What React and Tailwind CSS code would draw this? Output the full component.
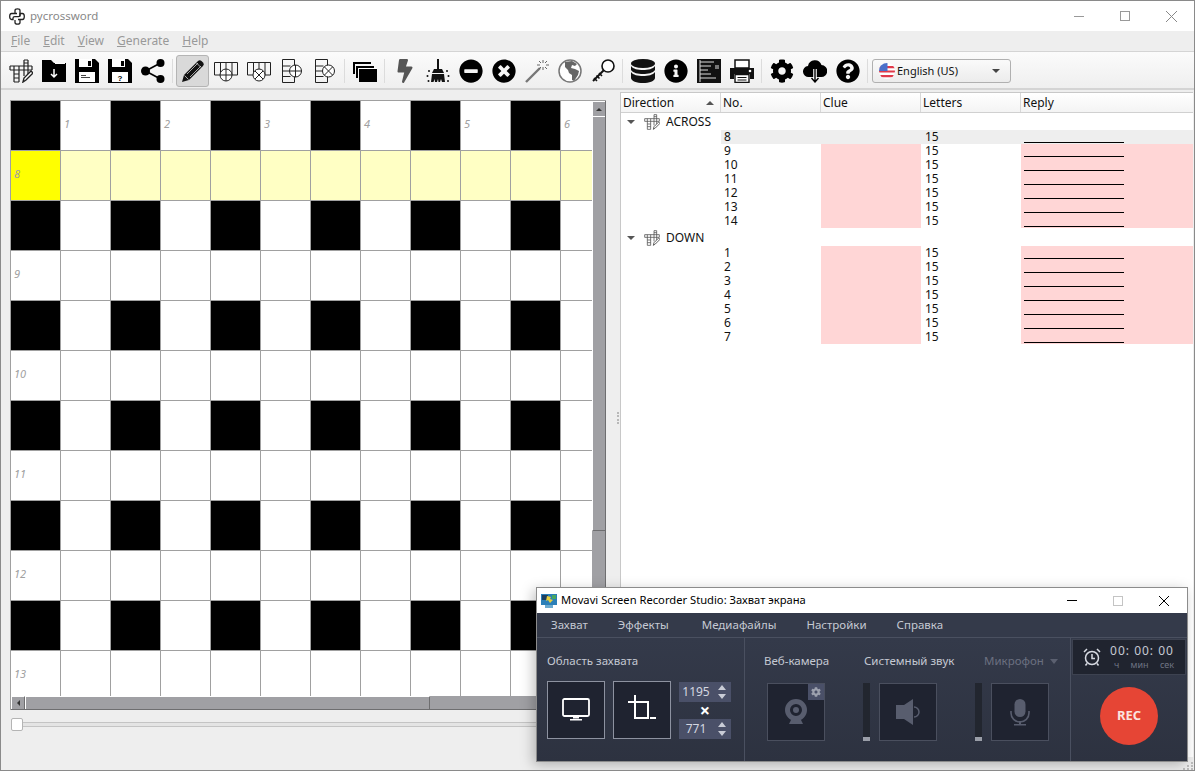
import { FaBolt, FaMinusCircle, FaTimesCircle, FaInfoCircle, FaCog, FaQuestionCircle } from "react-icons/fa";

const SANS = "font-['Noto_Sans','Open_Sans',sans-serif]";

// ── drawn icons ──────────────────────────────
function CrossIcon({ size = 24, color = "#222" }) {
  return (
    <svg width={size} height={size} viewBox="0 0 24 24" fill="none" stroke={color} strokeWidth="1.2">
      <path d="M1 7h22M1 11h22M1 7v4M5 7v16M10 7v16M5 15h5M5 19h5M5 23h5M15 1v16M19 1v14M15 1h4M15 4h4M23 7v4" />
      <path d="M14 23l1-4 7-7 2 2-7 7z" fill="#fff" strokeWidth="1.4" />
    </svg>
  );
}

function PythonIcon() {
  return (
    <svg width="17" height="17" viewBox="0 0 17 17" fill="none" stroke="#222" strokeWidth="1.3">
      <path d="M6 5.500V2.500C6 1.300 7 .8 8.500.8S11 1.300 11 2.500V7c0 1-.7 1.600-1.600 1.600H5.800C4.800 8.600 4 9.300 4 10.300v1.200H2.600C1.400 11.500.7 10.300.7 8.500S1.400 5.500 2.600 5.500H8" />
      <path d="M11 8.500V5.500h2.400c1.200 0 1.900 1.200 1.900 3s-.7 3-1.900 3H9M11 11.500v3c0 1.200-1 1.700-2.500 1.700S6 15.700 6 14.500V12" />
    </svg>
  );
}

function FolderIcon() {
  return (
    <svg width="24" height="24" viewBox="0 0 24 24">
      <path d="M0 1h9l3 3h12v19H0z" fill="#000" />
      <path d="M13 4h10v1H13z" fill="#fff" />
      <path d="M12 10v8M9 15l3 3 3-3" stroke="#fff" strokeWidth="1.500" fill="none" />
    </svg>
  );
}

function FloppyIcon({ question }) {
  return (
    <svg width="24" height="24" viewBox="0 0 24 24">
      <path d="M0 0h20l4 4v20H0z" fill="#000" />
      <path d="M4 0h13v8H4z" fill="#fff" />
      <path d="M13 2h3v5h-3z" fill="#000" />
      <path d="M4 13h16v10H4z" fill="#fff" />
      {question ? (
        <text x="12" y="22" fontSize="8" fontWeight="700" textAnchor="middle" fontFamily="Liberation Sans, sans-serif">?</text>
      ) : (
        <path d="M6 16h5v1H6zM6 18h9v1H6z" fill="#444" />
      )}
    </svg>
  );
}

function ShareIcon() {
  return (
    <svg width="24" height="24" viewBox="0 0 24 24" fill="#000">
      <circle cx="4.500" cy="12" r="4.500" />
      <circle cx="19.500" cy="4" r="4" />
      <circle cx="19.500" cy="20" r="4" />
      <path d="M4.500 12L19.500 4M4.500 12l15 8" stroke="#000" strokeWidth="1.600" />
    </svg>
  );
}

function PencilIcon() {
  return (
    <svg width="24" height="24" viewBox="0 0 24 24" fill="none">
      <path d="M1 23l2-7L17 2a2.500 2.500 0 0 1 3.500 0l1.500 1.500a2.500 2.500 0 0 1 0 3.500L8 21z" fill="#111" />
      <path d="M6 15L17 4M9 18L20 7M15.500 4l4.500 4.500" stroke="#d0d0d0" strokeWidth=".8" />
      <path d="M3.500 16.500l4 4" stroke="#d0d0d0" strokeWidth=".8" />
    </svg>
  );
}

function RowIcon({ kind }) {
  return (
    <svg width="24" height="24" viewBox="0 0 24 24" fill="none" stroke="#222" strokeWidth="1">
      <path d="M.5 3.500h23v12.500H.5zM6.500 3.500v12.500M18 3.500v12.500M12 3.500v9" />
      <circle cx="12" cy="16" r="6" fill="#fff" />
      {kind === "plus" ? <path d="M6 16h12M12 10v12" /> : <path d="M8 12l8 8M16 12l-8 8" />}
    </svg>
  );
}

function ColIcon({ kind }) {
  return (
    <svg width="24" height="24" viewBox="0 0 24 24" fill="none" stroke="#222" strokeWidth="1">
      <path d="M2.500.5h12v23h-12zM2.500 7h8M2.500 17.500h8M2.500 12h8" />
      <circle cx="15.500" cy="12" r="6" fill="#fff" />
      {kind === "plus" ? <path d="M9.500 12h12M15.500 6v12" /> : <path d="M11.500 8l8 8M19.500 8l-8 8" />}
    </svg>
  );
}

function WindowsIcon() {
  return (
    <svg width="24" height="24" viewBox="0 0 24 24">
      <path d="M0 3h18v2H0zM0 5h2v10H0z" fill="#000" />
      <path d="M3 7h18v2H3zM3 9h2v10H3z" fill="#000" />
      <path d="M6 10h18v13H6z" fill="#000" />
      <path d="M6 9h18v1H6z" fill="#fff" />
    </svg>
  );
}

function BroomIcon() {
  return (
    <svg width="24" height="24" viewBox="0 0 24 24" fill="#111">
      <path d="M11 0h2v10h-2z" />
      <path d="M8 10h8l2 4H6z" />
      <path d="M6 15h12l1 8h-3l-1-3-1 3h-1.500l-.5-3-1 3h-2l-.5-3-1 3H5z" />
      <circle cx="3" cy="12" r="1" />
      <circle cx="21" cy="12" r="1" />
      <circle cx="1.500" cy="17" r="1" />
      <circle cx="22.500" cy="17" r="1" />
      <circle cx="2.500" cy="22" r="1" />
      <circle cx="22" cy="22" r="1" />
    </svg>
  );
}

function WandIcon() {
  return (
    <svg width="24" height="24" viewBox="0 0 24 24" fill="none">
      <path d="M1 23L15 9" stroke="#777" strokeWidth="2.400" />
      <path d="M18 1v3M18 8v3M12 6h3M21 6h3M14 2l2 2M22 2l-2 2M14 10l2-2M22 10l-2-2" stroke="#666" strokeWidth="1" />
    </svg>
  );
}

function GlobeIcon() {
  return (
    <svg width="24" height="24" viewBox="0 0 24 24">
      <circle cx="12" cy="12" r="11" fill="#fff" stroke="#777" strokeWidth="1.500" />
      <path d="M7 3l7-1 5 3-2 2-3-1-1 3 4 1 4 2-1 4-4 6-2-1 0-5-3-2-1-3-3-3z" fill="#666" />
    </svg>
  );
}

function KeyIcon() {
  return (
    <svg width="24" height="24" viewBox="0 0 24 24" fill="none" stroke="#111">
      <path d="M13 11L2 22" strokeWidth="2" />
      <circle cx="17" cy="7" r="6" strokeWidth="1.600" fill="#fff" />
      <path d="M3 19l3 3M5.500 16.500l3 3M8 14l3 3" strokeWidth="1.600" />
    </svg>
  );
}

function DatabaseIcon() {
  return (
    <svg width="24" height="24" viewBox="0 0 24 24" fill="#111">
      <ellipse cx="12" cy="4.500" rx="12" ry="4.500" />
      <path d="M0 7c2 3 7 4 12 4s10-1 12-4v4c-2 3-7 4-12 4S2 14 0 11z" />
      <path d="M0 13c2 3 7 4 12 4s10-1 12-4v6c0 3-6 5-12 5S0 22 0 19z" />
    </svg>
  );
}

function ListIcon() {
  return (
    <svg width="24" height="24" viewBox="0 0 24 24">
      <path d="M0 0h24v24H0z" fill="#111" />
      <path d="M3 1v22M3 3h14M3 7h11M3 11h8M3 15h11M3 19h16M18 7h4M18 9h4" stroke="#ddd" strokeWidth="1" fill="none" />
    </svg>
  );
}

function PrinterIcon() {
  return (
    <svg width="24" height="24" viewBox="0 0 24 24">
      <path d="M5 1h14v8H5z" fill="#fff" stroke="#111" strokeWidth="1.500" />
      <path d="M0 9h24v11h-4v-5H4v5H0z" fill="#111" />
      <path d="M5 15.500h14v8H5z" fill="#fff" stroke="#111" strokeWidth="1.400" />
      <path d="M7.500 18.500h9M7.500 21h9" stroke="#111" strokeWidth="1" />
      <circle cx="20" cy="12" r="1.300" fill="#fff" />
    </svg>
  );
}

function CloudIcon() {
  return (
    <svg width="24" height="24" viewBox="0 0 24 24">
      <path d="M6 18a5.500 5.500 0 0 1-1-11 7 7 0 0 1 13.500-1A6 6 0 0 1 18 18z" fill="#000" />
      <path d="M12 10v12" stroke="#fff" strokeWidth="3.600" />
      <path d="M12 10v12M8.500 19l3.500 4 3.500-4" stroke="#000" strokeWidth="1.400" fill="none" />
    </svg>
  );
}

function FlagIcon() {
  return (
    <svg width="16" height="16" viewBox="0 0 16 16">
      <defs>
        <clipPath id="flagClip"><circle cx="8" cy="8" r="8" /></clipPath>
      </defs>
      <g clipPath="url(#flagClip)">
        <path d="M0 0h16v16H0z" fill="#fff" />
        <path d="M0 3h16v2.200H0zM0 7.400h16v2.200H0zM0 12h16v2.200H0z" fill="#e0394a" />
        <path d="M0 0h8.500v8H0z" fill="#4a6fc9" />
      </g>
    </svg>
  );
}

function MovaviLogo() {
  return (
    <svg width="16" height="14" viewBox="0 0 16 14">
      <path d="M0 0h16v11H0z" fill="#2b7fb8" />
      <path d="M1 1h6v5H1z" fill="#1d3f5f" />
      <path d="M6 2l4 1-1 2 3 1-3 3-2-3-2 1z" fill="#e8cf3a" />
      <path d="M11 1h4v4h-4z" fill="#48a860" />
      <path d="M4 11h8v3H4z" fill="#6aa9cf" />
    </svg>
  );
}

function MonitorIcon() {
  return (
    <svg width="28" height="24" viewBox="0 0 28 24" fill="none">
      <rect x="1" y="1" width="26" height="17" rx="1.500" stroke="#fff" strokeWidth="1.800" />
      <path d="M11 18.500h6v2h-6zM8 21h12v1.500H8z" fill="#fff" />
    </svg>
  );
}

function CropIcon() {
  return (
    <svg width="28" height="30" viewBox="0 0 28 30" fill="none" stroke="#fff" strokeWidth="2">
      <path d="M7 0v23h13V7H0M22 23h6" />
    </svg>
  );
}

function Arrows() {
  return (
    <svg width="8" height="14" viewBox="0 0 8 14" fill="#c9ccd6">
      <path d="M4 0l4 5H0zM4 14l4-5H0z" />
    </svg>
  );
}

function WebcamIcon() {
  return (
    <svg width="24" height="26" viewBox="0 0 24 26" fill="#585d6e">
      <path d="M12 0a11 11 0 1 1 0 22a11 11 0 0 1 0-22zm0 5a6 6 0 1 0 0 12a6 6 0 0 0 0-12z" />
      <circle cx="12" cy="11" r="3" />
      <path d="M7 21h10l2 4H5z" />
    </svg>
  );
}

function SpeakerIcon() {
  return (
    <svg width="24" height="26" viewBox="0 0 24 26" fill="#585d6e">
      <path d="M0 6h8l9-6v26l-9-6H0z" />
      <path d="M18 8a5 5 0 0 1 0 10" fill="none" stroke="#585d6e" strokeWidth="1.500" />
    </svg>
  );
}

function MicIcon() {
  return (
    <svg width="20" height="27" viewBox="0 0 20 27" fill="#585d6e">
      <rect x="4.500" y="0" width="11" height="18" rx="5.500" />
      <path d="M1 12v2a9 9 0 0 0 18 0v-2" fill="none" stroke="#585d6e" strokeWidth="1.600" />
      <path d="M9 22h2v3H9zM4 25h12v1.600H4z" />
    </svg>
  );
}

function AlarmIcon() {
  return (
    <svg width="18" height="18" viewBox="0 0 18 18" fill="none" stroke="#d7dae2" strokeWidth="1.500">
      <circle cx="9" cy="10" r="6.500" />
      <path d="M9 6v4.500h3M1 4l3-3M17 4l-3-3M4 15.500L2.500 17.500M14 15.500l1.500 2" />
    </svg>
  );
}

// ── toolbar ──────────────────────────────
const Tool = ({ children, active }) => (
  <div className={`w-[33px] h-[32px] flex items-center justify-center shrink-0 ${active ? "bg-[#d9d9d9] border border-[#b4b4b4] rounded-[3px]" : ""}`}>
    {children}
  </div>
);
const Sep = () => (
  <div className="w-[7px] flex justify-center shrink-0">
    <div className="w-px h-[24px] bg-[#dcdcdc]" />
  </div>
);

function Toolbar() {
  return (
    <div className="h-[39px] flex items-center pl-[3px] pt-[2px] bg-gradient-to-b from-[#fbfbfb] to-[#efefef] border-t border-b-2 border-[#d4d4d4] text-black">
      <Tool><CrossIcon /></Tool>
      <Tool><FolderIcon /></Tool>
      <Tool><FloppyIcon /></Tool>
      <Tool><FloppyIcon question /></Tool>
      <Tool><ShareIcon /></Tool>
      <Sep />
      <Tool active><PencilIcon /></Tool>
      <Tool><RowIcon kind="plus" /></Tool>
      <Tool><RowIcon kind="x" /></Tool>
      <Tool><ColIcon kind="plus" /></Tool>
      <Tool><ColIcon kind="x" /></Tool>
      <Sep />
      <Tool><WindowsIcon /></Tool>
      <Sep />
      <Tool><FaBolt size={24} color="#555" /></Tool>
      <Tool><BroomIcon /></Tool>
      <Tool><FaMinusCircle size={24} /></Tool>
      <Tool><FaTimesCircle size={24} /></Tool>
      <Tool><WandIcon /></Tool>
      <Tool><GlobeIcon /></Tool>
      <Tool><KeyIcon /></Tool>
      <Sep />
      <Tool><DatabaseIcon /></Tool>
      <Tool><FaInfoCircle size={24} /></Tool>
      <Tool><ListIcon /></Tool>
      <Tool><PrinterIcon /></Tool>
      <Sep />
      <Tool><FaCog size={24} /></Tool>
      <Tool><CloudIcon /></Tool>
      <Tool><FaQuestionCircle size={24} /></Tool>
      <Sep />
      <div className="w-[139px] h-[24px] ml-[1px] flex items-center pl-[6px] pr-[10px] border border-[#b0b0b0] rounded-[3px] bg-gradient-to-b from-[#fafafa] to-[#ececec] text-[11px] text-[#111]">
        <FlagIcon />
        <span className="ml-[2px]">English (US)</span>
        <span className="ml-auto w-0 h-0 border-x-[4px] border-x-transparent border-t-[4px] border-t-[#444]" />
      </div>
    </div>
  );
}

// ── crossword grid ──────────────────────────────
const ROWS = [0, 1, 2, 3, 4, 5, 6, 7, 8, 9, 10, 11];
const COLS = [0, 1, 2, 3, 4, 5, 6, 7, 8, 9, 10, 11];
const ROW_NUMBERS = { 1: 8, 3: 9, 5: 10, 7: 11, 9: 12, 11: 13 };

function Cell({ r, c }) {
  const black = r % 2 === 0 && c % 2 === 0;
  let bg = "bg-white";
  if (black) bg = "bg-black";
  else if (r === 1) bg = c === 0 ? "bg-[#ffff00]" : "bg-[#ffffc4]";

  let num = null;
  if (r === 0 && c % 2 === 1) num = (c + 1) / 2;
  if (c === 0 && ROW_NUMBERS[r]) num = ROW_NUMBERS[r];

  return (
    <div className={`w-[50px] h-[50px] shrink-0 flex items-center pl-[3px] pb-[2px] border-r border-b border-[#a0a0a0] italic text-[11px] text-[#a0a0a0] ${bg}`}>
      {num}
    </div>
  );
}

function Board() {
  return (
    <div className="w-[596px] h-[610px] flex flex-col border-l border-t border-[#a0a0a0]">
      <div className="flex h-[595px]">
        <div className="w-[581px] overflow-hidden">
          {ROWS.map((r) => (
            <div key={r} className="flex">
              {COLS.map((c) => <Cell key={c} r={r} c={c} />)}
            </div>
          ))}
        </div>
        <div className="w-[14px] flex flex-col bg-[#a0a0a4] border-r border-[#6e6e70]">
          <div className="h-[15px] flex items-center justify-center border-t border-l border-white border-b-[#6e6e70]">
            <span className="w-0 h-0 border-x-[3px] border-x-transparent border-b-[3px] border-b-[#333]" />
          </div>
          <div className="h-[415px] border-t border-l border-white border-b border-b-[#6e6e70]" />
        </div>
      </div>
      <div className="flex h-[14px] bg-[#a0a0a4] border-b border-[#6e6e70]">
        <div className="w-[14px] flex items-center justify-center border-t border-l border-white border-r border-r-[#6e6e70]">
          <span className="w-0 h-0 border-y-[3px] border-y-transparent border-r-[3px] border-r-[#333]" />
        </div>
        <div className="w-[405px] border-t border-l border-white border-r border-r-[#6e6e70]" />
      </div>
    </div>
  );
}

// ── clue table ──────────────────────────────
const ACROSS = [8, 9, 10, 11, 12, 13, 14];
const DOWN = [1, 2, 3, 4, 5, 6, 7];

function ClueRow({ no, selected }) {
  return (
    <div className={`flex h-[14px] leading-[14px] ${selected ? "bg-[#eeeeee]" : ""}`}>
      <div className="w-[100px] shrink-0 bg-white" />
      <div className="w-[100px] shrink-0 pl-[3px]">{no}</div>
      <div className={`w-[100px] shrink-0 ${selected ? "" : "bg-[#ffd6d6]"}`} />
      <div className="w-[100px] shrink-0 pl-[4px]">15</div>
      <div className={`flex-1 pl-[3px] ${selected ? "" : "bg-[#ffd6d6]"}`}>
        <div className="w-[100px] h-[13px] border-b border-black" />
      </div>
    </div>
  );
}

function Group({ label }) {
  return (
    <div className="h-[16px] flex items-center pl-[6px]">
      <span className="w-0 h-0 border-x-[4px] border-x-transparent border-t-[4px] border-t-[#555]" />
      <span className="ml-[9px]"><CrossIcon size={16} color="#555" /></span>
      <span className="ml-[6px] leading-[16px]">{label}</span>
    </div>
  );
}

function ClueTable() {
  return (
    <div className="w-[573px] h-[665px] bg-white border-l border-t border-[#c8c8c8] text-[12px] text-[#111]">
      <div className="flex h-[20px] border-b border-[#d0d0d0] bg-gradient-to-b from-white to-[#f4f4f4] leading-[20px]">
        <div className="w-[100px] pl-[2px] border-r border-[#d8d8d8] flex items-center justify-between pr-[6px]">
          Direction
          <span className="w-0 h-0 border-x-[4px] border-x-transparent border-b-[4px] border-b-[#555]" />
        </div>
        <div className="w-[100px] pl-[2px] border-r border-[#d8d8d8]">No.</div>
        <div className="w-[100px] pl-[2px] border-r border-[#d8d8d8]">Clue</div>
        <div className="w-[100px] pl-[2px] border-r border-[#d8d8d8]">Letters</div>
        <div className="flex-1 pl-[2px]">Reply</div>
      </div>
      <div className="pt-[1px]">
        <Group label="ACROSS" />
        {ACROSS.map((n) => <ClueRow key={n} no={n} selected={n === 8} />)}
        <div className="h-[2px]" />
        <Group label="DOWN" />
        {DOWN.map((n) => <ClueRow key={n} no={n} />)}
      </div>
    </div>
  );
}

// ── recorder window ──────────────────────────────
function Spinner({ value }) {
  return (
    <div className="w-[52px] h-[20px] flex items-center bg-[#4a5068] text-[12px] text-[#d4d7e0]">
      <span className="w-[34px] text-center">{value}</span>
      <span className="ml-[5px]"><Arrows /></span>
    </div>
  );
}

function Level() {
  return (
    <div className="w-[7px] h-[58px] flex flex-col justify-end bg-[#22262f]">
      <div className="h-[4px] bg-[#9a9ea8]" />
    </div>
  );
}

function DarkBox({ children }) {
  return (
    <div className="relative w-[58px] h-[58px] flex items-center justify-center bg-[#1f2330] border border-[#4a4f5e]">
      {children}
    </div>
  );
}

function Recorder() {
  return (
    <div className={`absolute left-[535px] top-[586px] w-[652px] h-[175px] flex flex-col border border-[#8c8c8c] shadow-[-3px_3px_12px_rgba(0,0,0,0.25)] ${SANS}`}>
      <div className="h-[25px] shrink-0 flex items-center bg-white text-[11.200px] text-black pl-[4px]">
        <MovaviLogo />
        <span className="ml-[4px]">Movavi Screen Recorder Studio: Захват экрана</span>
        <div className="ml-auto flex items-center">
          <div className="w-[46px] flex justify-center"><div className="w-[10px] h-px bg-black" /></div>
          <div className="w-[46px] flex justify-center"><div className="w-[10px] h-[10px] border border-[#c4c4c4]" /></div>
          <div className="w-[46px] flex justify-center">
            <svg width="12" height="12" viewBox="0 0 12 12" stroke="#000" strokeWidth="1"><path d="M1 1l10 10M11 1L1 11" /></svg>
          </div>
        </div>
      </div>
      <div className="h-[25px] shrink-0 flex items-center pl-[14px] gap-[30px] bg-[#343a4a] border-b border-[#4a5060] text-[11.500px] text-[#c5c9d3]">
        <span>Захват</span>
        <span>Эффекты</span>
        <span className="ml-[3px]">Медиафайлы</span>
        <span>Настройки</span>
        <span>Справка</span>
      </div>
      <div className="flex-1 flex bg-gradient-to-b from-[#343a4a] to-[#2d3240] text-[11.500px] text-[#c5c9d3]">
        <div className="w-[208px] shrink-0 border-r border-[#4a5060] pl-[10px] pt-[14px]">
          <div className="leading-[18px]">Область захвата</div>
          <div className="flex items-center mt-[11px] gap-[8px]">
            <div className="w-[58px] h-[58px] flex items-center justify-center bg-[#1f2330] border border-[#8d92a0]"><MonitorIcon /></div>
            <div className="w-[58px] h-[58px] flex items-center justify-center bg-[#1f2330] border border-[#8d92a0]"><CropIcon /></div>
            <div className="flex flex-col items-center">
              <Spinner value="1195" />
              <span className="h-[17px] leading-[17px] text-[18px] font-bold text-white">×</span>
              <Spinner value="771" />
            </div>
          </div>
        </div>
        <div className="w-[326px] shrink-0 border-r border-[#4a5060] pt-[14px] pl-[19px]">
          <div className="flex leading-[18px]">
            <span className="w-[100px]">Веб-камера</span>
            <span className="w-[120px]">Системный звук</span>
            <span className="text-[#6b7080] flex items-center">
              Микрофон
              <span className="ml-[6px] w-0 h-0 border-x-[4px] border-x-transparent border-t-[5px] border-t-[#5b6070]" />
            </span>
          </div>
          <div className="flex mt-[13px] ml-[3px]">
            <DarkBox>
              <WebcamIcon />
              <div className="absolute right-0 top-0 w-[16px] h-[16px] flex items-center justify-center bg-[#4a5068]">
                <FaCog size={10} color="#9da1ae" />
              </div>
            </DarkBox>
            <div className="ml-[38px]"><Level /></div>
            <div className="ml-[9px]"><DarkBox><SpeakerIcon /></DarkBox></div>
            <div className="ml-[38px]"><Level /></div>
            <div className="ml-[9px]"><DarkBox><MicIcon /></DarkBox></div>
          </div>
        </div>
        <div className="flex-1 flex flex-col">
          <div className="h-[36px] m-[1px] mb-0 flex items-center pl-[10px] bg-[#20242f] border border-[#3d4250]">
            <AlarmIcon />
            <div className="ml-[9px] flex flex-col items-center leading-none">
              <span className="text-[12px] tracking-[1px] text-[#c5c9d3]">00: 00: 00</span>
              <span className="mt-[3px] text-[9px] text-[#6f7484] w-[64px] flex justify-between pl-[4px]">
                <span>ч</span><span>мин</span><span>сек</span>
              </span>
            </div>
          </div>
          <div className="flex-1 flex items-center justify-center pb-[5px]">
            <div className="w-[58px] h-[58px] rounded-full bg-[#e64535] flex items-center justify-center text-[13px] font-bold text-[#fbe3df]">
              REC
            </div>
          </div>
        </div>
      </div>
    </div>
  );
}

// ── page ──────────────────────────────
export default function App() {
  return (
    <div className={`relative w-[1195px] h-[771px] overflow-hidden flex flex-col bg-[#eeeeee] border border-[#8a8a8a] ${SANS}`}>
      <div className="h-[30px] shrink-0 flex items-center bg-white pl-[8px]">
        <PythonIcon />
        <span className="ml-[4px] text-[11.500px] text-[#888]">pycrossword</span>
        <div className="ml-auto flex items-center">
          <div className="w-[46px] flex justify-center"><div className="w-[10px] h-px bg-[#999]" /></div>
          <div className="w-[46px] flex justify-center"><div className="w-[10px] h-[10px] border border-[#999]" /></div>
          <div className="w-[46px] flex justify-center">
            <svg width="11" height="11" viewBox="0 0 11 11" stroke="#888" strokeWidth="1"><path d="M0 0l11 11M11 0L0 11" /></svg>
          </div>
        </div>
      </div>
      <div className="h-[20px] shrink-0 flex items-center pl-[10px] gap-[13px] text-[12px] text-[#999]">
        <span><u>F</u>ile</span>
        <span><u>E</u>dit</span>
        <span><u>V</u>iew</span>
        <span><u>G</u>enerate</span>
        <span><u>H</u>elp</span>
      </div>
      <Toolbar />
      <div className="flex-1 flex min-h-0">
        <div className="w-[615px] shrink-0 pl-[9px] pt-[10px]">
          <Board />
          <div className="flex items-center mt-[8px] ml-[1px] h-[13px] w-[595px]">
            <div className="w-[12px] h-[13px] bg-white border border-[#b4b4b4] rounded-[2px] shrink-0" />
            <div className="flex-1 h-[5px] bg-[#e4e4e4] border-y border-[#c4c4c4]" />
          </div>
        </div>
        {/* splitter handle */}
        <div className="w-[4px] shrink-0 flex items-center justify-center pb-[25px]">
          <div className="w-[2px] h-[12px] border-l-2 border-dotted border-[#b8b8b8]" />
        </div>
        <div className="pt-[2px]"><ClueTable /></div>
      </div>
      {/* size grip */}
      <svg className="absolute right-0 bottom-0" width="14" height="8" viewBox="0 0 14 8" fill="#bdbdbd">
        <path d="M11 0h2v2h-2zM7 3h2v2H7zM11 3h2v2h-2zM3 6h2v2H3zM7 6h2v2H7zM11 6h2v2h-2z" />
      </svg>
      <Recorder />
    </div>
  );
}
